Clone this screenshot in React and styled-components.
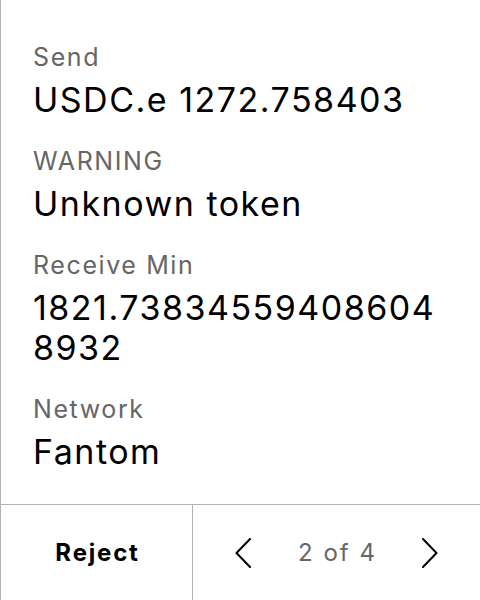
import React from 'react';
import styled, { createGlobalStyle } from 'styled-components';

const GlobalStyle = createGlobalStyle`
  * {
    box-sizing: border-box;
  }

  body {
    margin: 0;
    background: #ffffff;
    font-family: Inter, 'Liberation Sans', sans-serif;
  }
`;

const Screen = styled.div`
  width: 480px;
  height: 600px;
  display: flex;
  flex-direction: column;
  border-left: 1px solid #b4b4b4;
  background: #ffffff;
`;

const Details = styled.div`
  flex: 1;
  display: flex;
  flex-direction: column;
  gap: 25px;
  padding: 41px 32px 0;
`;

const Field = styled.div`
  display: flex;
  flex-direction: column;
  gap: 7px;
`;

const Label = styled.div`
  font-size: 25px;
  line-height: 32px;
  letter-spacing: 1.6px;
  color: #666666;
`;

const Value = styled.div`
  font-size: 34px;
  line-height: 40px;
  letter-spacing: 1.5px;
  color: #000000;
  word-break: break-all;
`;

const Footer = styled.div`
  height: 96px;
  display: grid;
  grid-template-columns: 192px 1fr;
  border-top: 1px solid #b4b4b4;
`;

const RejectButton = styled.button`
  border: none;
  border-right: 1px solid #b4b4b4;
  background: none;
  font-family: inherit;
  font-size: 24px;
  font-weight: 700;
  letter-spacing: 1.8px;
  color: #000000;
  padding: 0 0 0 2px;
  cursor: pointer;
`;

const Pager = styled.div`
  display: flex;
  align-items: center;
  justify-content: space-between;
  padding: 0 42px;
`;

const ArrowButton = styled.button`
  border: none;
  background: none;
  padding: 0;
  width: 16px;
  height: 30px;
  display: flex;
  cursor: pointer;
`;

const PageCount = styled.span`
  font-size: 24px;
  letter-spacing: 2px;
  color: #666666;
  padding-left: 2px;
`;

const Chevron = ({ dir }) => (
  <svg width="16" height="30" viewBox="0 0 16 30" fill="none">
    <polyline
      points={dir === 'left' ? '15,1 1.5,15 15,29' : '1,1 14.5,15 1,29'}
      stroke="#000"
      strokeWidth="2"
      strokeLinecap="round"
      strokeLinejoin="round"
    />
  </svg>
);

const fields = [
  { label: 'Send', value: 'USDC.e 1272.758403' },
  { label: 'WARNING', value: 'Unknown token' },
  { label: 'Receive Min', value: '1821.738345594086048932' },
  { label: 'Network', value: 'Fantom' },
];

const App = () => {
  return (
    <>
      <GlobalStyle />
      <Screen>
        <Details>
          {fields.map((f) => (
            <Field key={f.label}>
              <Label>{f.label}</Label>
              <Value>{f.value}</Value>
            </Field>
          ))}
        </Details>
        <Footer>
          <RejectButton>Reject</RejectButton>
          <Pager>
            <ArrowButton aria-label="Previous">
              <Chevron dir="left" />
            </ArrowButton>
            <PageCount>2 of 4</PageCount>
            <ArrowButton aria-label="Next">
              <Chevron dir="right" />
            </ArrowButton>
          </Pager>
        </Footer>
      </Screen>
    </>
  );
};

export default App;
